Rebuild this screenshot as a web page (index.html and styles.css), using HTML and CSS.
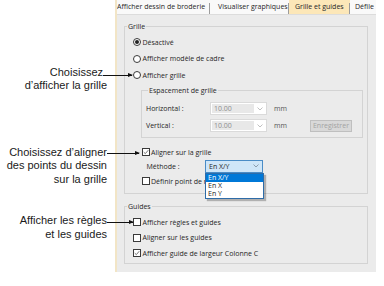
FILE: index.html
```html
<!DOCTYPE html>
<html lang="fr">
<head>
    <meta charset="UTF-8">
    <meta name="viewport" content="width=device-width, initial-scale=1.0">
    <title>Grille et guides</title>
    <link rel="stylesheet" href="styles.css">
</head>
<body>
<div class="page">

    <div class="notes">
        <p class="note note-grid"><span class="lead">Choisissez</span><br>d’afficher la grille</p>
        <p class="note note-align"><span class="lead">Choisissez d’aligner</span><br>des points du dessin<br>sur la grille</p>
        <p class="note note-guides"><span class="lead">Afficher les règles</span><br>et les guides</p>
    </div>

    <div class="dialog">
        <div class="tabs">
            <span class="tab tab-1">Afficher dessin de broderie</span>
            <span class="tab tab-2">Visualiser graphiques</span>
            <span class="tab tab-3 active">Grille et guides</span>
            <span class="tab tab-4">Défile</span>
        </div>

        <div class="panel">
            <div class="group group-grid">
                <div class="group-title">Grille</div>
                <div class="options">
                    <div class="row"><span class="radio checked"></span>Désactivé</div>
                    <div class="row"><span class="radio"></span>Afficher modèle de cadre</div>
                    <div class="row"><span class="radio"></span>Afficher grille</div>
                </div>

                <div class="group subgroup">
                    <div class="group-title">Espacement de grille</div>
                    <div class="fields">
                        <div class="field">
                            <span class="field-label">Horizontal :</span>
                            <span class="combo disabled">
                                <span class="combo-value">10.00</span>
                                <svg class="chev" viewBox="0 0 6 4" width="6" height="4"><path d="M0.5 0.5 L3 3 L5.5 0.5" fill="none" stroke="#b0b0b0" stroke-width="0.8"/></svg>
                            </span>
                            <span class="unit">mm</span>
                        </div>
                        <div class="field">
                            <span class="field-label">Vertical :</span>
                            <span class="combo disabled">
                                <span class="combo-value">10.00</span>
                                <svg class="chev" viewBox="0 0 6 4" width="6" height="4"><path d="M0.5 0.5 L3 3 L5.5 0.5" fill="none" stroke="#b0b0b0" stroke-width="0.8"/></svg>
                            </span>
                            <span class="unit">mm</span>
                            <button class="btn" disabled>Enregistrer</button>
                        </div>
                    </div>
                </div>

                <div class="checks">
                    <div class="row">
                        <span class="check"><svg viewBox="0 0 8 8" width="6" height="6"><path d="M1 4.2 L3.1 6.2 L7 1.6" fill="none" stroke="#333" stroke-width="0.9"/></svg></span>Aligner sur la grille
                    </div>
                    <div class="row method">
                        <span class="field-label">Méthode :</span>
                        <span class="combo-wrap">
                            <span class="combo open">
                                <span class="combo-value">En X/Y</span>
                                <svg class="chev" viewBox="0 0 6 4" width="6" height="4"><path d="M0.5 0.5 L3 3 L5.5 0.5" fill="none" stroke="#7a8a99" stroke-width="0.8"/></svg>
                            </span>
                            <ul class="dropdown">
                                <li class="selected">En X/Y</li>
                                <li>En X</li>
                                <li>En Y</li>
                            </ul>
                        </span>
                    </div>
                    <div class="row"><span class="check"></span><span class="clipped">Définir point de référence</span></div>
                </div>
            </div>

            <div class="group group-guides">
                <div class="group-title">Guides</div>
                <div class="options">
                    <div class="row"><span class="check"></span>Afficher règles et guides</div>
                    <div class="row"><span class="check"></span>Aligner sur les guides</div>
                    <div class="row">
                        <span class="check"><svg viewBox="0 0 8 8" width="6" height="6"><path d="M1 4.2 L3.1 6.2 L7 1.6" fill="none" stroke="#333" stroke-width="0.9"/></svg></span>Afficher guide de largeur Colonne C
                    </div>
                </div>
            </div>
        </div>
    </div>

</div>
</body>
</html>
```

FILE: styles.css
```css
body {
    margin: 0;
    background-color: #fff;
    font-family: "Open Sans", sans-serif;
    color: #1e1e1e;
}

.page {
    display: flex;
    width: 384px;
    height: 286px;
    overflow: hidden;
}

/* Légendes à gauche */
.notes {
    flex: none;
    width: 115px;
    box-sizing: border-box;
    padding: 66px 8px 0 0;
    text-align: right;
    font-family: "Liberation Sans", Arial, sans-serif;
    font-size: 11px;
    line-height: 13.3px;
    color: #1a1a1a;
    position: relative;
    z-index: 2;
}

.note {
    margin: 0;
}

.note-align {
    margin-top: 53.4px;
}

.note-guides {
    margin-top: 28.6px;
}

.lead {
    display: inline-block;
    position: relative;
}

.lead::after {
    content: "";
    position: absolute;
    left: 100%;
    height: 1px;
    background-color: #111;
}

.lead::before {
    content: "";
    position: absolute;
    border-left: 5px solid #111;
    border-top: 2.5px solid transparent;
    border-bottom: 2.5px solid transparent;
}

.note-grid .lead {
    margin-right: 4px;
}

.note-grid .lead::after {
    top: 9px;
    width: 29px;
}

.note-grid .lead::before {
    top: 7px;
    left: calc(100% + 25px);
}

.note-align .lead::after {
    top: 7px;
    width: 32px;
}

.note-align .lead::before {
    top: 5px;
    left: calc(100% + 28px);
}

.note-guides .lead::after {
    top: 8px;
    width: 26px;
}

.note-guides .lead::before {
    top: 6px;
    left: calc(100% + 22px);
}

/* Boîte de dialogue */
.dialog {
    flex: none;
    width: 259px;
    height: 272px;
    border-left: 2px solid #f2e5c6;
    display: flex;
    flex-direction: column;
    font-size: 7px;
    color: #262626;
}

.tabs {
    height: 14px;
    display: flex;
    background-color: #f9f9f9;
    white-space: nowrap;
}

.tab {
    position: relative;
    box-sizing: border-box;
    line-height: 14px;
    overflow: hidden;
}

.tab::after {
    content: "";
    position: absolute;
    right: 0;
    top: 3px;
    bottom: 0;
    width: 1px;
    background-color: #9c9c9c;
}

.tab-1 {
    width: 93px;
}

.tab-2 {
    width: 79px;
    padding-left: 8px;
}

.tab-3 {
    width: 61px;
    padding-left: 6px;
}

.tab-4 {
    flex: 1;
    padding-left: 5px;
}

.tab-4::after {
    display: none;
}

.active {
    background-color: #fce7b8;
}

.panel {
    height: 258px;
    box-sizing: border-box;
    padding: 11px 8px 0 7px;
    background-color: #ebebeb;
    border-top: 1px solid #dcdcdc;
}

.group {
    border: 1px solid #d3d3d3;
}

.group-title {
    display: table;
    margin: -5px 0 0 2px;
    padding: 0 1px;
    line-height: 9px;
    background-color: #ebebeb;
}

.group-grid {
    padding-bottom: 4.5px;
}

.options {
    margin-top: 3px;
    padding-left: 8px;
}

.row {
    display: flex;
    align-items: center;
    height: 16.5px;
    white-space: nowrap;
}

.radio,
.check {
    flex: none;
    width: 8px;
    height: 8px;
    box-sizing: border-box;
    border: 1px solid #3a3a3a;
    background-color: #fff;
    margin-right: 1.5px;
    display: flex;
    align-items: center;
    justify-content: center;
}

.radio {
    border-radius: 50%;
}

.radio.checked::after {
    content: "";
    width: 4px;
    height: 4px;
    border-radius: 50%;
    background-color: #222;
}

.clipped {
    width: 56px;
    overflow: hidden;
}

.subgroup {
    margin: 6.5px 4px 0 16px;
    padding: 0 10px 3px 4px;
}

.fields {
    margin-top: 5px;
}

.field {
    display: flex;
    align-items: center;
    height: 17px;
}

.field-label {
    flex: none;
    width: 64px;
}

.combo {
    display: flex;
    align-items: center;
    width: 57px;
    height: 13px;
    box-sizing: border-box;
    padding: 1px;
    border: 1px solid #dadada;
    background-color: #fff;
}

.combo-value {
    flex: 1;
    align-self: stretch;
    padding-left: 2px;
    line-height: 9px;
}

.disabled .combo-value {
    background-color: #e8e8e8;
    color: #8e8e8e;
}

.chev {
    flex: none;
    margin: 0 2px 0 3px;
}

.unit {
    margin-left: 7px;
    color: #555;
}

.btn {
    margin-left: auto;
    width: 42px;
    height: 12px;
    padding: 0;
    font-family: inherit;
    font-size: 7px;
    line-height: 10px;
    color: #a3a3a3;
    background-color: #d8d8d8;
    border: 1px solid #bfbfbf;
}

.checks {
    margin-top: 7px;
    padding-left: 16.5px;
}

.checks .row {
    height: 14.5px;
}

.method .field-label {
    width: 63.5px;
    padding-left: 5px;
    box-sizing: border-box;
}

.combo-wrap {
    position: relative;
    margin-top: -1px;
}

.combo.open {
    width: 58px;
    background-color: #cfe6f8;
    border-color: #4a8cc6;
}

.dropdown {
    position: absolute;
    left: 0;
    top: 13px;
    width: 59px;
    box-sizing: border-box;
    margin: 0;
    padding: 0;
    list-style: none;
    background-color: #fff;
    border: 1px solid #2e6ca8;
    box-shadow: 2px 2px 1px rgba(0, 0, 0, 0.25);
    z-index: 3;
}

.dropdown li {
    line-height: 8.2px;
    padding-left: 2px;
}

.dropdown .selected {
    background-color: #0078d7;
    color: #fff;
}

.group-guides {
    margin-top: 12px;
    padding-bottom: 2px;
}

.group-guides .options {
    margin-top: 3.5px;
}

.group-guides .row {
    height: 15.5px;
}
```
